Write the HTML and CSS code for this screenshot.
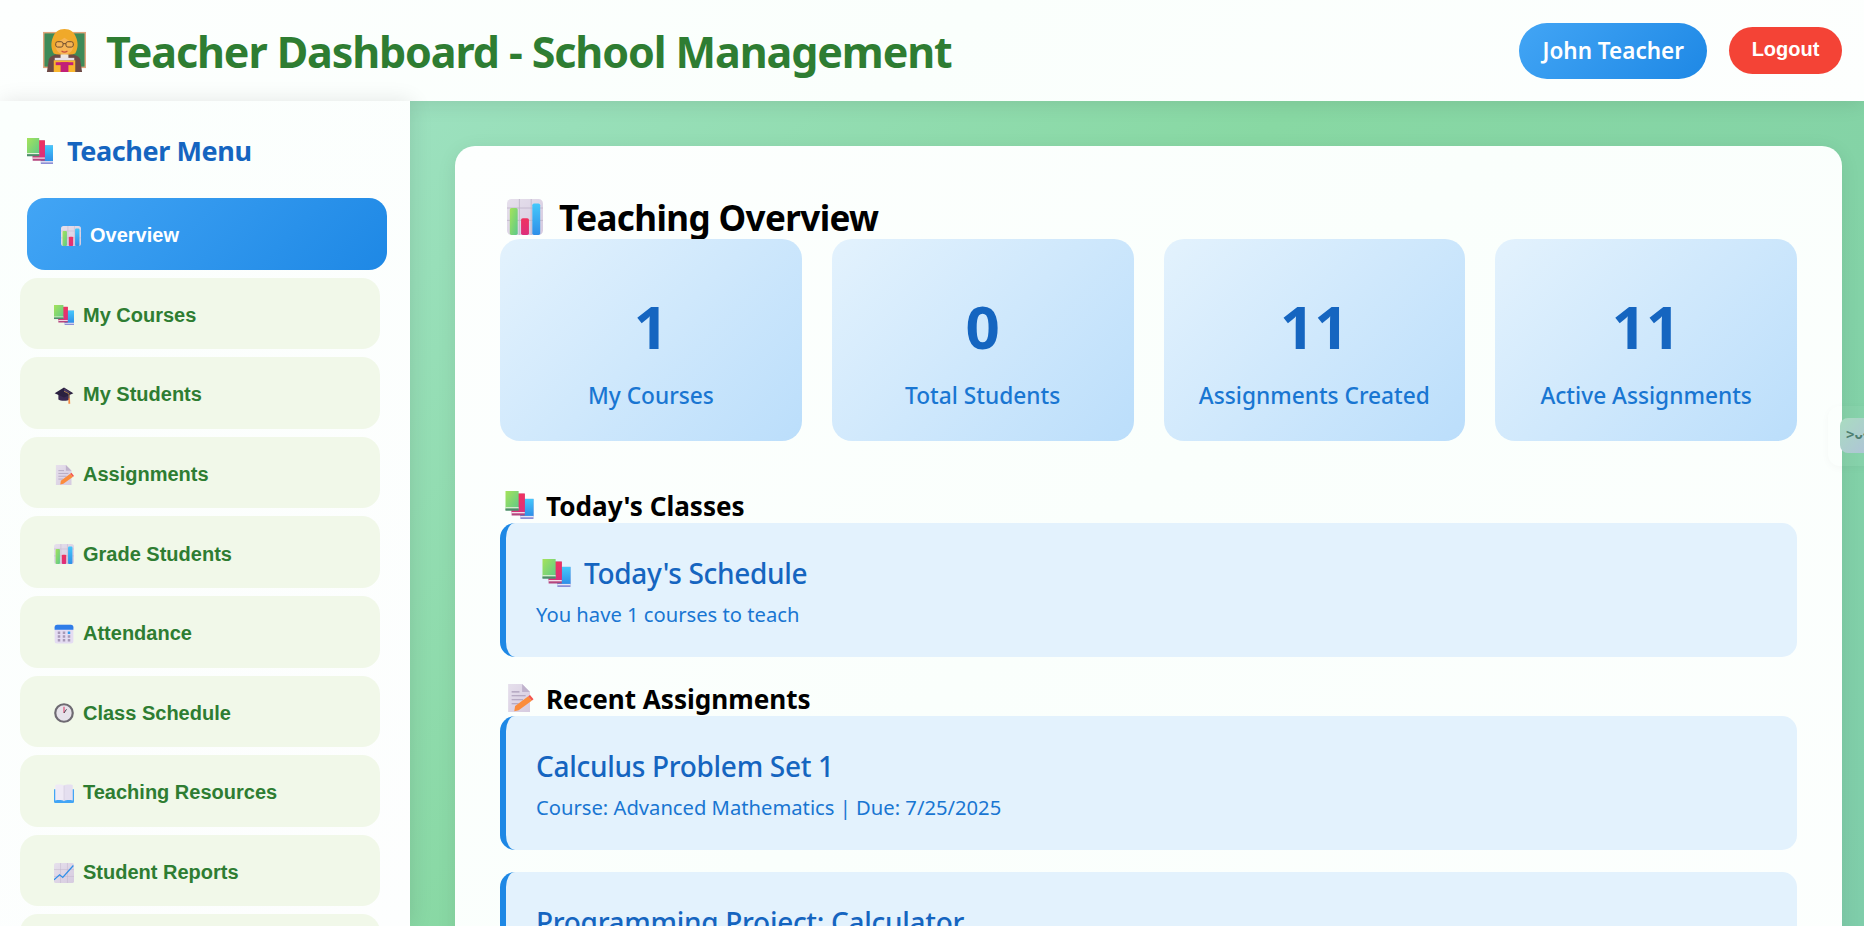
FILE: index.html
```html
<!DOCTYPE html>
<html lang="en">
<head>
    <meta charset="UTF-8">
    <meta name="viewport" content="width=device-width, initial-scale=1.0">
    <title>Teacher Dashboard - School Management</title>
    <link rel="stylesheet" href="styles.css">
</head>
<body>
    <!-- emoji drawn once, used everywhere -->
    <svg class="sprite" aria-hidden="true">
        <defs>
            <linearGradient id="gGreen" x1="0" y1="0" x2="1" y2="1"><stop offset="0" stop-color="#a6e35a"/><stop offset="1" stop-color="#5cc98a"/></linearGradient>
            <linearGradient id="gBlue" x1="0" y1="0" x2="0" y2="1"><stop offset="0" stop-color="#45c8fb"/><stop offset="1" stop-color="#2f8fe8"/></linearGradient>
            <linearGradient id="gPink" x1="0" y1="0" x2="0" y2="1"><stop offset="0" stop-color="#f0325f"/><stop offset="1" stop-color="#dc2f7c"/></linearGradient>
            <linearGradient id="gLilac" x1="0" y1="0" x2="1" y2="1"><stop offset="0" stop-color="#e6e0ec"/><stop offset="1" stop-color="#d6cbe0"/></linearGradient>
        </defs>
        <symbol id="i-books" viewBox="0 0 32 32">
            <rect x="17" y="9" width="15" height="23" fill="#8d8fd6"/>
            <rect x="17" y="9" width="15" height="19.500" fill="url(#gBlue)"/>
            <rect x="17" y="28.500" width="15" height="1.500" fill="#e9e6f5"/>
            <rect x="7" y="3" width="15" height="25" fill="#b5457e"/>
            <rect x="7" y="3" width="15" height="21" fill="url(#gPink)"/>
            <rect x="7" y="24" width="15" height="1.500" fill="#f3dfe8"/>
            <rect x="0" y="0" width="15" height="22" fill="url(#gGreen)"/>
            <rect x="0" y="18.500" width="15" height="1.500" fill="#e8f3df"/>
            <rect x="0" y="20" width="15" height="2.500" fill="#4e8a6c"/>
        </symbol>
        <symbol id="i-chart" viewBox="0 0 32 32">
            <rect x="0" y="0" width="32" height="32" rx="4" fill="url(#gLilac)"/>
            <path d="M11 0v32M21.500 0v32M0 8h32M0 19h32" stroke="#c2b7cc" stroke-width="0.8"/>
            <rect x="2.500" y="8" width="7" height="24" rx="1.500" fill="url(#gGreen)"/>
            <rect x="12.500" y="17" width="7" height="15" rx="1.500" fill="url(#gPink)"/>
            <rect x="22.500" y="4" width="7" height="28" rx="1.500" fill="url(#gBlue)"/>
        </symbol>
        <symbol id="i-cap" viewBox="0 0 32 32">
            <path d="M7 14h18v9c-3 3-15 3-18 0z" fill="#3a2a52"/>
            <path d="M16 4L31 13 16 20 1 13z" fill="#2b2140"/>
            <path d="M16 5L28 13 16 11z" fill="#4a3a63"/>
            <path d="M16 10l8 4v7" fill="none" stroke="#d9a441" stroke-width="1"/>
            <path d="M23 21h2.500l.5 9h-3z" fill="#f58a42"/>
        </symbol>
        <symbol id="i-memo" viewBox="0 0 32 32">
            <path d="M3 0h16l9 9v23H3z" fill="url(#gLilac)"/>
            <path d="M19 0l9 9h-9z" fill="#bfb2cc"/>
            <path d="M7 9h9M7 13.500h16M7 18h13M7 22.500h8" stroke="#a99cb8" stroke-width="1.200"/>
            <path d="M11 25l15-11 4 5-15 11-5 1z" fill="#fb8c3c"/>
            <path d="M26 14l2-1.500 4 5-2 1.500z" fill="#f4544c"/>
        </symbol>
        <symbol id="i-calendar" viewBox="0 0 32 32">
            <rect x="1" y="1" width="30" height="30" rx="4" fill="#e4dcf2"/>
            <path d="M1 9V5a4 4 0 0 1 4-4h22a4 4 0 0 1 4 4v4z" fill="#2f7de8"/>
            <g fill="#a79ab8">
                <rect x="6" y="12" width="4" height="4"/><rect x="14" y="12" width="4" height="4"/><rect x="22" y="12" width="4" height="4" fill="#2f9df0"/>
                <rect x="6" y="18" width="4" height="4"/><rect x="14" y="18" width="4" height="4"/><rect x="22" y="18" width="4" height="4"/>
                <rect x="6" y="24" width="4" height="4"/><rect x="14" y="24" width="4" height="4"/><rect x="22" y="24" width="4" height="4"/>
            </g>
        </symbol>
        <symbol id="i-clock" viewBox="0 0 32 32">
            <circle cx="16" cy="16" r="14" fill="#e6e2ea" stroke="#6e6a72" stroke-width="3.500"/>
            <path d="M16 16V6" stroke="#e0315c" stroke-width="1.600"/>
            <path d="M16 16l4-6" stroke="#4a4650" stroke-width="1.600"/>
        </symbol>
        <symbol id="i-open" viewBox="0 0 32 32">
            <path d="M0 10h32v20a2 2 0 0 1-2 2H2a2 2 0 0 1-2-2z" fill="#42a5f5"/>
            <path d="M2 3c5-1 11-1 14 1v25c-3-2-9-2-14-1z" fill="#efeaf6"/>
            <path d="M30 3c-5-1-11-1-14 1v25c3-2 9-2 14-1z" fill="#e5dff0"/>
            <path d="M16 4v25" stroke="#c9c0d6" stroke-width="0.8"/>
        </symbol>
        <symbol id="i-trend" viewBox="0 0 32 32">
            <rect x="0" y="0" width="32" height="32" rx="3" fill="url(#gLilac)"/>
            <path d="M10.500 0v32M21.500 0v32M0 10.500h32M0 21.500h32" stroke="#c2b7cc" stroke-width="0.8"/>
            <path d="M0 27l9-8 5 4L31 4" fill="none" stroke="#2f8fe8" stroke-width="2"/>
        </symbol>
        <symbol id="i-teacher" viewBox="0 0 44 44">
            <rect x="0" y="3" width="44" height="37" fill="#e0a57c"/>
            <rect x="1.500" y="4.500" width="41" height="34" fill="#3e8a58"/>
            <path d="M4 44l2-13c1-4 9-6 16-6s15 2 16 6l2 13z" fill="#6d4a46"/>
            <path d="M11 25c-3-5-3-11-1-16 2-6 6-9 12-9s10 3 12 9c2 5 2 11-1 16-6 2-16 2-22 0z" fill="#f0a92a"/>
            <path d="M13 14c3-1 6-3 9-5 3 2 6 4 9 5 1 7-3 12-9 12s-10-5-9-12z" fill="#f7b556"/>
            <rect x="13" y="13" width="7.500" height="5.500" rx="2" fill="none" stroke="#6b4a2c" stroke-width="1"/>
            <rect x="23.500" y="13" width="7.500" height="5.500" rx="2" fill="none" stroke="#6b4a2c" stroke-width="1"/>
            <path d="M20.500 15h3" stroke="#6b4a2c" stroke-width="1"/>
            <path d="M19 22.500c2 1.500 4 1.500 6 0" stroke="#c8503c" stroke-width="1.200" fill="none"/>
            <rect x="18" y="26" width="8" height="5" fill="#efe6df"/>
            <rect x="11" y="32" width="22" height="12" fill="#f9b52e"/>
            <rect x="13" y="34" width="18" height="3" fill="#c21f78"/>
            <rect x="18" y="34" width="8" height="10" fill="#c21f78"/>
            <rect x="12" y="29.500" width="20" height="2.500" fill="#e8e2ea"/>
        </symbol>
    </svg>

    <header class="topbar">
        <div class="brand">
            <svg class="emoji emoji-xl"><use href="#i-teacher"/></svg>
            <h1>Teacher Dashboard - School Management</h1>
        </div>
        <div class="user-area">
            <span class="user-pill">John Teacher</span>
            <button class="logout-btn">Logout</button>
        </div>
    </header>

    <div class="layout">
        <aside class="sidebar">
            <h3 class="side-title"><svg class="emoji emoji-side"><use href="#i-books"/></svg>Teacher Menu</h3>
            <nav class="side-menu">
                <button class="menu-btn active"><svg class="emoji"><use href="#i-chart"/></svg>Overview</button>
                <button class="menu-btn"><svg class="emoji"><use href="#i-books"/></svg>My Courses</button>
                <button class="menu-btn"><svg class="emoji"><use href="#i-cap"/></svg>My Students</button>
                <button class="menu-btn"><svg class="emoji"><use href="#i-memo"/></svg>Assignments</button>
                <button class="menu-btn"><svg class="emoji"><use href="#i-chart"/></svg>Grade Students</button>
                <button class="menu-btn"><svg class="emoji"><use href="#i-calendar"/></svg>Attendance</button>
                <button class="menu-btn"><svg class="emoji"><use href="#i-clock"/></svg>Class Schedule</button>
                <button class="menu-btn"><svg class="emoji"><use href="#i-open"/></svg>Teaching Resources</button>
                <button class="menu-btn"><svg class="emoji"><use href="#i-trend"/></svg>Student Reports</button>
                <button class="menu-btn"></button>
            </nav>
        </aside>

        <main class="main">
            <section class="panel">
                <h2 class="panel-title"><svg class="emoji emoji-lg"><use href="#i-chart"/></svg><span class="panel-title-text">Teaching Overview</span></h2>

                <div class="stats">
                    <div class="stat-card"><div class="stat-num">1</div><div class="stat-label">My Courses</div></div>
                    <div class="stat-card"><div class="stat-num">0</div><div class="stat-label">Total Students</div></div>
                    <div class="stat-card"><div class="stat-num">11</div><div class="stat-label">Assignments Created</div></div>
                    <div class="stat-card"><div class="stat-num">11</div><div class="stat-label">Active Assignments</div></div>
                </div>

                <h3 class="sub-title"><svg class="emoji emoji-md"><use href="#i-books"/></svg>Today's Classes</h3>
                <div class="info-card">
                    <h4><svg class="emoji emoji-md"><use href="#i-books"/></svg>Today's Schedule</h4>
                    <p>You have 1 courses to teach</p>
                </div>

                <h3 class="sub-title"><svg class="emoji emoji-md"><use href="#i-memo"/></svg>Recent Assignments</h3>
                <div class="info-card">
                    <h4>Calculus Problem Set 1</h4>
                    <p>Course: Advanced Mathematics | Due: 7/25/2025</p>
                </div>
                <div class="info-card">
                    <h4>Programming Project: Calculator</h4>
                    <p>Course: Computer Science | Due: 8/1/2025</p>
                </div>
            </section>
        </main>
    </div>

    <div class="side-tab"><span class="side-tab-face">&gt;ᴗ&lt;</span></div>
</body>
</html>
```

FILE: styles.css
```css
* { box-sizing: border-box; }
html, body { height: 100%; margin: 0; overflow: hidden; }
body { font-family: "Noto Sans", sans-serif; background: linear-gradient(135deg, #a8e6cf 0%, #88d8a3 50%, #7fcdaa 100%); display: flex; flex-direction: column; }
.sprite { position: absolute; width: 0; height: 0; }
.emoji { width: 20px; height: 20px; flex: none; }
.emoji-side { width: 28px; height: 26px; }
.emoji-md { width: 29px; height: 28px; }
.emoji-lg { width: 36px; height: 36px; }
.emoji-xl { width: 43px; height: 43px; }

.topbar { position: relative; z-index: 1; height: 101px; flex: none; display: flex; justify-content: space-between; align-items: center; padding: 0 22px 0 43px; background: linear-gradient(135deg, #fdfffe, #fafffc 50%, #fdfffe); box-shadow: 0 2px 20px rgba(0, 0, 0, 0.1); }
.brand { display: flex; align-items: center; gap: 20px; }
.brand h1 { margin: 2px 0 0; font-size: 43px; line-height: 60px; font-weight: 700; color: #2e7d32; letter-spacing: -1.1px; }
.user-area { display: flex; align-items: center; gap: 22px; }
.user-pill { height: 56px; padding: 0 23px; display: flex; align-items: center; border-radius: 28px; color: white; font-size: 22.5px; font-weight: 600; background: linear-gradient(135deg, #42a5f5, #1e88e5); }
.logout-btn { width: 113px; height: 47px; border: none; border-radius: 24px; background: #f44336; color: white; font-family: "Liberation Sans", sans-serif; font-size: 20px; font-weight: 700; padding: 0 0 2px; }

.layout { flex: 1; display: flex; min-height: 0; }
.sidebar { position: relative; z-index: 2; width: 410px; flex: none; padding: 31px 30px 0 20px; background: linear-gradient(135deg, #fbfffd, #fdfefe); box-shadow: 2px 0 20px rgba(0, 0, 0, 0.1); }
.side-title { margin: 0 0 29px 6px; height: 37px; display: flex; align-items: center; gap: 13px; font-size: 27px; font-weight: 700; color: #1565c0; letter-spacing: -0.4px; }
.side-menu { display: flex; flex-direction: column; gap: 8px; }
.menu-btn { width: 360px; height: 71.6px; flex: none; display: flex; align-items: center; gap: 9px; padding: 4px 34px 0; border: none; border-radius: 18px; background: #f1f8e9; color: #2e7d32; font-family: "Liberation Sans", sans-serif; font-size: 20px; font-weight: 700; text-align: left; }
.menu-btn.active { margin-left: 7px; background: linear-gradient(135deg, #42a5f5, #1e88e5); color: white; }

.main { flex: 1; min-width: 0; padding: 45px 22px 0 45px; }
.panel { height: 1200px; padding: 45px; border-radius: 20px; background: linear-gradient(135deg, #fdfffe, #fafffc 40%, #fdfffe); box-shadow: 0 4px 20px rgba(0, 0, 0, 0.08); }
.panel-title { margin: 0; height: 48px; display: flex; align-items: center; gap: 16px; padding-left: 7px; font-size: 35px; line-height: 48px; font-weight: 700; color: black; letter-spacing: -0.6px; }
.panel-title .emoji { margin-top: 4px; }
.panel-title-text { padding-top: 5px; }

.stats { display: grid; grid-template-columns: repeat(4, 1fr); gap: 30px; margin-bottom: 48px; }
.stat-card { height: 202px; padding-top: 46px; border-radius: 20px; text-align: center; background: linear-gradient(135deg, #e3f2fd, #bbdefb); }
.stat-num { font-size: 60px; line-height: 82px; font-weight: 700; color: #1565c0; }
.stat-label { margin-top: 14px; font-size: 22.7px; line-height: 30px; font-weight: 500; color: #1976d2; }

.sub-title { margin: 25px 0 0; height: 34px; display: flex; align-items: center; gap: 12px; padding-left: 5px; font-size: 26.1px; font-weight: 700; color: black; }
.sub-title .emoji { margin-top: -2px; }
.info-card { height: 134px; margin-bottom: 22px; padding: 30px 30px 0; border-left: 6px solid #1e88e5; border-radius: 15px; background: #e3f2fd; }
.info-card h4 { margin: 0; height: 40px; display: flex; align-items: center; gap: 13px; font-size: 28px; font-weight: 500; color: #1565c0; letter-spacing: -0.3px; }
.info-card h4 .emoji { margin-left: 6px; }
.info-card p { margin: 7px 0 0; font-size: 20.2px; line-height: 28px; color: #1976d2; }

.side-tab { position: absolute; right: -14px; top: 406px; width: 50px; height: 60px; border-radius: 12px; background: rgba(255, 255, 255, 0.04); box-shadow: 0 2px 8px rgba(0, 0, 0, 0.03); }
.side-tab-face { position: absolute; left: 12px; top: 12px; width: 40px; height: 35px; padding-left: 6px; border-radius: 8px 0 0 8px; background: linear-gradient(135deg, #a9dcc0, #b0bfdc); color: #4d7f70; font-family: "DejaVu Sans Mono", monospace; font-size: 14px; font-weight: 700; line-height: 33px; overflow: hidden; white-space: nowrap; }
```
